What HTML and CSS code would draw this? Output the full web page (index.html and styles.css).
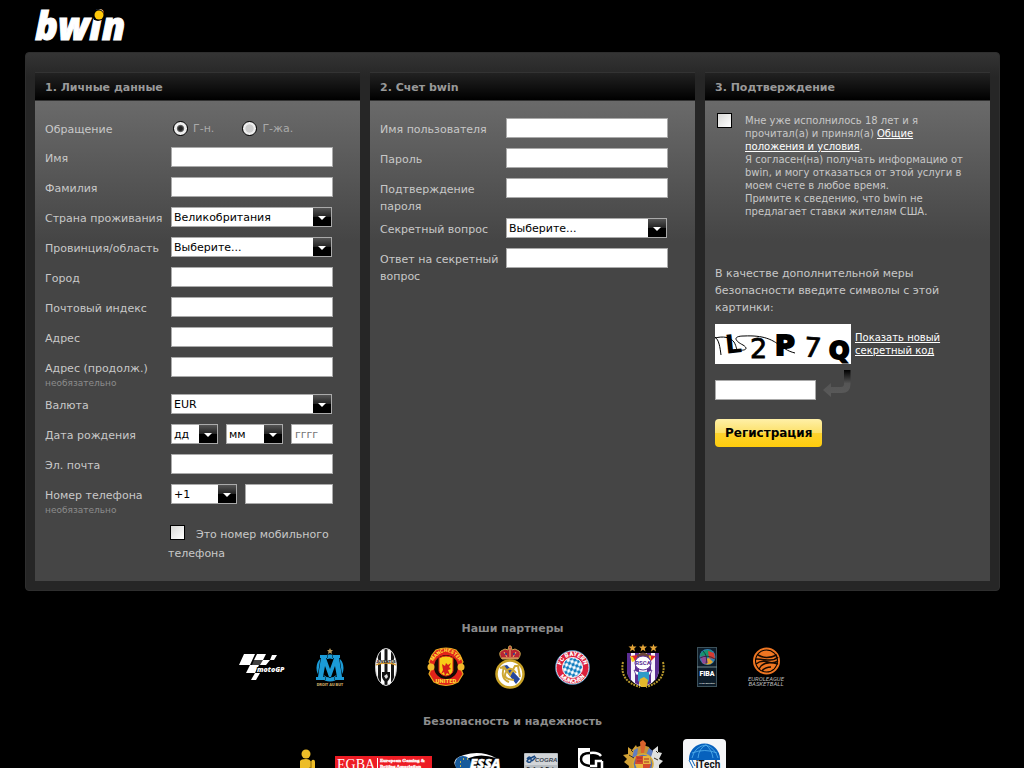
FILE: index.html
```html
<!DOCTYPE html>
<html lang="ru">
<head>
    <meta charset="UTF-8">
    <meta name="viewport" content="width=device-width, initial-scale=1.0">
    <title>bwin - Регистрация</title>
    <link rel="stylesheet" href="styles.css">
</head>
<body>
    <header class="site-header">
        <a href="#" class="logo" aria-label="bwin">
            <svg width="92" height="36" viewBox="0 0 92 36">
                <text x="1" y="31" class="logo-text">bwin</text>
                <circle cx="64" cy="6" r="6" fill="#000"/>
                <circle cx="65" cy="6" r="4.500" fill="#ffc80a"/>
            </svg>
        </a>
    </header>

    <form class="register">
        <section class="panel">
            <h2>1. Личные данные</h2>
            <div class="panel-body">
                <div class="row row-radio">
                    <span class="label">Обращение</span>
                    <div class="radios">
                        <label><input type="radio" name="title" checked>Г-н.</label>
                        <label><input type="radio" name="title">Г-жа.</label>
                    </div>
                </div>
                <div class="row">
                    <label class="label" for="firstName">Имя</label>
                    <input type="text" id="firstName" class="field">
                </div>
                <div class="row">
                    <label class="label" for="lastName">Фамилия</label>
                    <input type="text" id="lastName" class="field">
                </div>
                <div class="row">
                    <label class="label" for="country">Страна проживания</label>
                    <select id="country" class="field"><option>Великобритания</option></select>
                </div>
                <div class="row">
                    <label class="label" for="region">Провинция/область</label>
                    <select id="region" class="field"><option>Выберите...</option></select>
                </div>
                <div class="row">
                    <label class="label" for="city">Город</label>
                    <input type="text" id="city" class="field">
                </div>
                <div class="row">
                    <label class="label" for="zip">Почтовый индекс</label>
                    <input type="text" id="zip" class="field">
                </div>
                <div class="row">
                    <label class="label" for="address">Адрес</label>
                    <input type="text" id="address" class="field">
                </div>
                <div class="row">
                    <label class="label" for="address2">Адрес (продолж.)<small>необязательно</small></label>
                    <input type="text" id="address2" class="field">
                </div>
                <div class="row">
                    <label class="label" for="currency">Валюта</label>
                    <select id="currency" class="field"><option>EUR</option></select>
                </div>
                <div class="row">
                    <label class="label" for="day">Дата рождения</label>
                    <div class="field-group">
                        <select id="day" class="select-day"><option>дд</option></select>
                        <select class="select-month" aria-label="Месяц"><option>мм</option></select>
                        <input type="text" class="grow" placeholder="гггг" aria-label="Год">
                    </div>
                </div>
                <div class="row">
                    <label class="label" for="email">Эл. почта</label>
                    <input type="text" id="email" class="field">
                </div>
                <div class="row">
                    <label class="label" for="phone">Номер телефона<small>необязательно</small></label>
                    <div class="field-group">
                        <select class="select-code" aria-label="Код страны"><option>+1</option></select>
                        <input type="text" id="phone" class="grow">
                    </div>
                </div>
                <label class="mobile"><input type="checkbox">Это номер мобильного телефона</label>
            </div>
        </section>

        <section class="panel">
            <h2>2. Счет bwin</h2>
            <div class="panel-body">
                <div class="row">
                    <label class="label" for="username">Имя пользователя</label>
                    <input type="text" id="username" class="field">
                </div>
                <div class="row">
                    <label class="label" for="password">Пароль</label>
                    <input type="password" id="password" class="field">
                </div>
                <div class="row">
                    <label class="label" for="password2">Подтверждение пароля</label>
                    <input type="password" id="password2" class="field">
                </div>
                <div class="row">
                    <label class="label" for="question">Секретный вопрос</label>
                    <select id="question" class="field"><option>Выберите...</option></select>
                </div>
                <div class="row">
                    <label class="label" for="answer">Ответ на секретный вопрос</label>
                    <input type="text" id="answer" class="field">
                </div>
            </div>
        </section>

        <section class="panel">
            <h2>3. Подтверждение</h2>
            <div class="panel-body confirm">
                <div class="terms">
                    <input type="checkbox" id="terms">
                    <label for="terms">Мне уже исполнилось 18 лет и я прочитал(а) и принял(а) <a href="#">Общие положения и условия</a>.<br>Я согласен(на) получать информацию от bwin, и могу отказаться от этой услуги в моем счете в любое время.<br>Примите к сведению, что bwin не предлагает ставки жителям США.</label>
                </div>
                <label class="captcha-label" for="captcha">В качестве дополнительной меры безопасности введите символы с этой картинки:</label>
                <div class="captcha">
                    <svg width="136" height="40" viewBox="0 0 136 40">
                        <rect width="136" height="40" fill="#fff"/>
                        <g class="captcha-text">
                            <text x="10" y="29" font-size="26" font-weight="bold" transform="rotate(-6 18 20)">L</text>
                            <text x="35" y="34" font-size="27" stroke="#000" stroke-width=".8">2</text>
                            <text x="60" y="31" font-size="27" font-weight="bold" stroke="#000" stroke-width="2">P</text>
                            <text x="89" y="33" font-size="27" stroke="#000" stroke-width=".8" transform="rotate(5 98 24)">7</text>
                            <text x="114" y="35" font-size="24" font-weight="bold" stroke="#000" stroke-width="2">Q</text>
                        </g>
                        <path d="M0 13c4 3 5 10 6 18M0 14c8-2 15-1 19 4 3 5 2 8 4 8 9 1 10-2 5-5-8-4-11-9 1-9 20-1 28 4 34 8 6 4 9 7 17 9" fill="none" stroke="#000" stroke-width="1"/>
                    </svg>
                    <a href="#">Показать новый секретный код</a>
                </div>
                <div class="captcha-entry">
                    <input type="text" id="captcha">
                    <svg width="28" height="27" viewBox="0 0 28 27">
                        <defs>
                            <linearGradient id="arrowFade" x1="0" y1="0" x2="0" y2="1">
                                <stop offset="0" stop-color="#000"/>
                                <stop offset=".5" stop-color="#555"/>
                                <stop offset="1" stop-color="#5a5a5a"/>
                            </linearGradient>
                        </defs>
                        <path d="M21 0h6.500v14q0 9-9 9H8v4L0 20l8-7v4h10q3 0 3-3z" fill="url(#arrowFade)"/>
                    </svg>
                </div>
                <button type="submit" class="register-btn">Регистрация</button>
            </div>
        </section>
    </form>

    <footer>
        <h3>Наши партнеры</h3>
        <div class="logos partners">
            <!-- MotoGP -->
            <svg width="46" height="28" viewBox="0 0 46 28">
                <g fill="#fff">
                    <path d="M5 1h11l-5 11H0zM18 1h9l-3 6h-9zM24 7h7l2-5h5l-3 5h-4l-4 5h-6zM11 12h9l-4 8H7z"/>
                    <path d="M15 7h9l-2 5h-9z" opacity=".25"/>
                    <path d="M16 20h5l-4 7h-5z"/>
                </g>
                <text x="18" y="19" font-family="Open Sans, sans-serif" font-size="7" font-weight="800" font-style="italic" fill="#fff" stroke="#000" stroke-width="2" paint-order="stroke">motoGP</text>
            </svg>
            <!-- Olympique de Marseille -->
            <svg width="30" height="38" viewBox="0 0 30 38">
                <path d="M15 0l1 2h2l-1.500 1.500.5 2.500-2-1.300L13 6l.5-2.500L12 2h2z" fill="#b9985a"/>
                <circle cx="15" cy="20" r="11.500" fill="none" stroke="#1b9bd7" stroke-width="4"/>
                <path d="M5 7h7v3h-1l4 11 4-11h-1V7h7v3h-1l3 19h2v3h-9v-3h2l-2-11-4 11h-2L10 18 8 29h2v3H1v-3h2l3-19H5z" fill="#1b9bd7" stroke="#000" stroke-width="1" paint-order="stroke"/>
                <text x="15" y="38" text-anchor="middle" font-family="Roboto, sans-serif" font-size="4" font-weight="900" fill="#c9a765">DROIT AU BUT</text>
            </svg>
            <!-- Juventus -->
            <svg width="22" height="38" viewBox="0 0 22 38">
                <defs>
                    <clipPath id="juveShape"><ellipse cx="11" cy="19" rx="10.500" ry="18.500"/></clipPath>
                </defs>
                <g clip-path="url(#juveShape)">
                    <path d="M0 0h22v38H0z" fill="#fff"/>
                    <path d="M4.500 0v38M11 0v38M17.500 0v38" stroke="#161616" stroke-width="3"/>
                    <path d="M0 11q11 3 22 0v5q-11-3-22 0z" fill="#fff"/>
                    <path d="M0 17q11-4 22 0" fill="none" stroke="#d99a2e" stroke-width="1.500"/>
                    <path d="M7 24h8v5q-1 4-4 5-3-1-4-5z" fill="#111"/>
                    <path d="M9 28l3-2 1 3-2 2z" fill="#ddd"/>
                </g>
                <text x="11" y="15" text-anchor="middle" font-family="Roboto, sans-serif" font-size="4" font-weight="900" fill="#111">JUVENTUS</text>
                <ellipse cx="11" cy="19" rx="10.500" ry="18.500" fill="none" stroke="#ccc" stroke-width="1"/>
            </svg>
            <!-- Manchester United -->
            <svg width="38" height="38" viewBox="0 0 38 38">
                <path d="M5 7L9 2q10-4 20 0l4 5 3 7-3 5 3 7-5 8q-12 7-24 0L2 26l3-7-3-5z" fill="#e2231a" stroke="#e9a91f" stroke-width="1.200"/>
                <circle cx="19" cy="19" r="12" fill="#140b06"/>
                <circle cx="4" cy="19" r="3.500" fill="#f2b92c"/>
                <circle cx="34" cy="19" r="3.500" fill="#f2b92c"/>
                <path d="M12 10q7-4 14 0v13q-1 4-7 5-6-1-7-5z" fill="#f8cf17" stroke="#e2231a" stroke-width="1"/>
                <path d="M15 16l3 2 1-3 2 2 3-2-2 4 2 2-3 1 2 5-3-2-2 3-1-4-3 2 2-4z" fill="#d51f19"/>
                <path id="mufcTop" d="M4 16Q19-8 34 16" fill="none"/>
                <g font-family="Roboto, sans-serif" font-weight="900" fill="#ffdb35">
                    <text text-anchor="middle" font-size="5"><textPath href="#mufcTop" startOffset="50%">MANCHESTER</textPath></text>
                    <text x="19" y="35" text-anchor="middle" font-size="6">UNITED</text>
                </g>
            </svg>
            <!-- Real Madrid -->
            <svg width="30" height="43" viewBox="0 0 30 43">
                <path d="M7 13Q3 8 6 5l4-2 3 1 1-4h2l1 4 3-1 4 2q3 3-1 8z" fill="#b92332" stroke="#c8a44c" stroke-width="1"/>
                <path d="M7 12h16M15 2v9M9 6l3 5M21 6l-3 5" stroke="#e1c06a" stroke-width="1"/>
                <circle cx="11" cy="8" r="1" fill="#263c9c"/>
                <circle cx="19" cy="8" r="1" fill="#263c9c"/>
                <circle cx="15" cy="28" r="13.500" fill="#fff" stroke="#c9a227" stroke-width="2.500"/>
                <path d="M7 20l5-1 13 14-4 5z" fill="#26479c"/>
                <path d="M5 22l4-1 6 8 5-9h3l2 11M21 27q-6-8-10-1t8 8M9 21q-4 12 5 15" fill="none" stroke="#cfa936" stroke-width="2"/>
            </svg>
            <!-- Bayern -->
            <svg width="35" height="35" viewBox="0 0 35 35">
                <defs>
                    <pattern id="lozenge" width="4" height="5" patternUnits="userSpaceOnUse" patternTransform="rotate(20)">
                        <rect width="4" height="5" fill="#fff"/>
                        <path d="M2 0l2 2.500L2 5 0 2.500z" fill="#0878bd"/>
                    </pattern>
                    <path id="fcbTop" d="M6 17.500a11.500 11.500 0 0 1 23 0"/>
                    <path id="fcbBottom" d="M2 17.500a15.500 15.500 0 0 0 31 0"/>
                </defs>
                <circle cx="17.500" cy="17.500" r="16.500" fill="#dc1f3c" stroke="#fff" stroke-width="1"/>
                <circle cx="17.500" cy="17.500" r="17" fill="none" stroke="#3b83b9" stroke-width=".7"/>
                <circle cx="17.500" cy="17.500" r="10" fill="url(#lozenge)" stroke="#fff" stroke-width="1"/>
                <g font-family="Roboto, sans-serif" font-size="6" font-weight="900" fill="#fff" text-anchor="middle">
                    <text><textPath href="#fcbTop" startOffset="50%">FC BAYERN</textPath></text>
                    <text><textPath href="#fcbBottom" startOffset="50%">MÜNCHEN</textPath></text>
                </g>
            </svg>
            <!-- Anderlecht -->
            <svg width="47" height="46" viewBox="0 0 47 46">
                <path id="rscaStar" d="M12.500 0l1 2.500h3l-2.300 2 .8 3-2.500-1.800L10 7.500l.8-3-2.300-2h3z" fill="#e5a638"/>
                <use href="#rscaStar" x="10.500"/>
                <use href="#rscaStar" x="21"/>
                <path d="M7 9h32v18q-2 12-16 16Q9 39 7 27z" fill="#f6f3fb"/>
                <path d="M7 9h4v28q-4-5-4-10zM15 9h4v32l-4-2zM27 9h4v30l-4 2zM35 9h4v18q-1 6-4 10z" fill="#5b2e93"/>
                <path d="M10 12l8-1-3 6z" fill="#e2252b"/>
                <path d="M10 12l3 1 2 4-3 1z" fill="#f5cf1b"/>
                <path d="M36 12l-8-1 3 6z" fill="#e2252b"/>
                <path d="M31 12l-3-1 3 6z" fill="#f5cf1b"/>
                <path d="M17 11q6-5 12 0l-1 4H18z" fill="#6d4637"/>
                <ellipse cx="23" cy="19" rx="8" ry="7" fill="#fff" stroke="#5b2e93" stroke-width="1"/>
                <text x="23" y="21" text-anchor="middle" font-family="Roboto, sans-serif" font-size="6" font-weight="bold" fill="#5b2e93">RSCA</text>
                <path d="M14 26q9 5 18 0l-2 5H16z" fill="#fff" stroke="#5b2e93" stroke-width=".8"/>
                <path d="M18 28h11v9l-5 4-6-4z" fill="#2f9bc7"/>
                <path d="M20 35l4-2 4 3-1 7h-6l-2-4z" fill="#e4b82b"/>
                <path d="M3 18q-4 19 17 25M43 18q4 19-17 25" fill="none" stroke="#b5962c" stroke-width="2" stroke-dasharray="2 1"/>
            </svg>
            <!-- FIBA -->
            <svg width="20" height="40" viewBox="0 0 20 40">
                <rect x=".5" y=".5" width="19" height="39" fill="#0d1c29" stroke="#3d525b"/>
                <path d="M0 20h20" stroke="#71878d"/>
                <circle cx="10.500" cy="10" r="8" fill="#2f7fb4"/>
                <path d="M3 8q4-7 12-4l-5 7-5 1z" fill="#16956e"/>
                <path d="M11 4l6 2 1 6-6-1z" fill="#d53b32"/>
                <path d="M5 13l7-2 4 4q-5 5-11 0z" fill="#e3a72d"/>
                <path d="M3 10l6-2 2 8-5 1z" fill="#8c4b96"/>
                <path d="M6 4q5 5 3 13M3 11q7-4 15 1" fill="none" stroke="#0d1c29" stroke-width=".7"/>
                <text x="10" y="29" text-anchor="middle" font-family="Roboto, sans-serif" font-size="7" font-weight="900" fill="#fff">FIBA</text>
                <text x="10" y="37" text-anchor="middle" font-family="Roboto, sans-serif" font-size="2" fill="#fff">We Are Basketball</text>
            </svg>
            <!-- Euroleague -->
            <svg width="39" height="40" viewBox="0 0 39 40">
                <circle cx="19.500" cy="14" r="12.500" fill="none" stroke="#ef7622" stroke-width="2"/>
                <circle cx="19.500" cy="14" r="10.500" fill="#ef7622"/>
                <path d="M11 8q8 5 19 0M9 12q12 1 14 1M23 13q5 0 8-3M9 17q5-4 12-2 5 2 10-1M12 22q4-9 19-5M15 24q3-4 9-4" fill="none" stroke="#160900" stroke-width="1.500"/>
                <g font-family="Roboto, sans-serif" font-size="6" font-style="italic" fill="#bbb" text-anchor="middle">
                    <text x="19" y="34">EUROLEAGUE</text>
                    <text x="19" y="39">BASKETBALL</text>
                </g>
            </svg>
        </div>

        <h3>Безопасность и надежность</h3>
        <div class="logos">
            <svg width="16" height="30" viewBox="0 0 16 30">
                <g fill="#edbd28">
                    <circle cx="7" cy="5" r="4.500"/>
                    <path d="M1 12q1-2 6-2 4 0 5 3l1-2q3-1 3 2v7h-3v10H1z"/>
                </g>
                <path d="M12 13v6h-2" fill="none" stroke="#6b4e00" stroke-width=".8"/>
            </svg>
            <svg width="97" height="16" viewBox="0 0 97 16">
                <rect width="97" height="16" fill="#ed1c24"/>
                <text x="2" y="13" font-family="Liberation Serif, serif" font-size="14" fill="#fff">EGBA</text>
                <path d="M42.500 2v13" stroke="#fff"/>
                <g font-family="Liberation Serif, serif" font-size="5" font-weight="bold" fill="#fff" stroke="#fff" stroke-width=".3">
                    <text x="45" y="6">European Gaming &amp;</text>
                    <text x="45" y="12">Betting Association</text>
                </g>
            </svg>
            <svg width="52" height="22" viewBox="0 0 52 22">
                <path d="M8 18Q-5 7 12 2q17-5 32 3Q28 0 17 5T8 18z" fill="#fff"/>
                <ellipse cx="11" cy="11" rx="8" ry="8" fill="#175a9b"/>
                <path d="M11 6h1m3 0h1M8 9h1m-1 4h1m2 3h1" stroke="#f5d13c" stroke-width="1.500"/>
                <text x="18" y="15" font-family="Open Sans, sans-serif" font-size="13" font-weight="800" font-style="italic" fill="#fff" stroke="#fff" stroke-width=".5">ESSA</text>
                <path d="M12 18q18 4 36-2" fill="none" stroke="#fff"/>
            </svg>
            <svg width="34" height="22" viewBox="0 0 34 22">
                <rect width="34" height="22" rx="1" fill="#b7bdc2"/>
                <rect x="1" y="1" width="32" height="11" fill="#d2d5d8"/>
                <path d="M3 6q3-4 4 0T4 9t7-6M8 8l4-4" fill="none" stroke="#174782" stroke-width="1.500"/>
                <text x="11" y="9" font-family="Liberation Sans, sans-serif" font-size="6" font-style="italic" font-weight="bold" fill="#384450">COGRA</text>
                <text x="17" y="18" text-anchor="middle" font-family="Roboto, sans-serif" font-size="6" font-weight="900" fill="#222">Safe &amp; Fair</text>
            </svg>
            <svg width="25" height="32" viewBox="0 0 25 32">
                <path d="M0 0h12v32H0z" fill="#fff"/>
                <path d="M12 5Q3 5 3 11t9 7" fill="none" stroke="#000" stroke-width="2.500"/>
                <path d="M12 5q8-1 11 3M12 18h6v-5h6M24 13v7" fill="none" stroke="#fff" stroke-width="2.500"/>
            </svg>
            <svg width="40" height="48" viewBox="0 0 40 48">
                <path d="M5 7l4 3 4-5 3 7-4 12 2 13H4l2-11-5-4 3-3-4-4 5-1z" fill="#d2a135"/>
                <path d="M35 6l-5 4-3 7 2 20h7V25l4-4-4-2 3-6-4-1z" fill="#dfe0df"/>
                <path d="M14 7l6-2 6 2 2 5-4 4h-8l-4-5z" fill="#c49536"/>
                <path d="M17 2l3-2 3 3-2 10h-3z" fill="#db632c"/>
                <path d="M11 10l4-2-1 8-5 2zM26 8l4 3-2 6-5-2z" fill="#607dc1"/>
                <circle cx="20" cy="24" r="10" fill="#5474b5" stroke="#d9aa36" stroke-width="1.500"/>
                <path d="M13 16h7v8h-8zM20 24h8l-3 8h-5z" fill="#d34a2c"/>
                <path d="M20 16h7l1 8h-8zM12 24h8v8h-5z" fill="#e8b53e"/>
                <path d="M14 18h5m-5 3h5m2-2h5m-5 3h5" stroke="#a92c25"/>
                <path d="M8 10l2 2M6 15l5 3M33 11l2 2M31 18l4 2" stroke="#3c3120"/>
                <path d="M3 39h34l-4 7H7z" fill="#c49536"/>
            </svg>
            <svg width="43" height="50" viewBox="0 0 43 50">
                <rect width="43" height="50" rx="4" fill="#f5f6f8"/>
                <circle cx="21.500" cy="20" r="15.500" fill="#0761bd"/>
                <path d="M9 19Q12 7 23 6q9 3 12 13M15 19q1-10 8-13 6 5 7 13M9 14q13-5 25 0" fill="none" stroke="#55b3ee" stroke-width=".8"/>
                <path d="M5 21h33v14H5z" fill="#f5f6f8"/>
                <path d="M6 21l4 8M9 21l3 6" stroke="#0761bd"/>
                <text x="25" y="29" text-anchor="middle" font-family="Roboto, sans-serif" font-size="10" font-weight="bold" fill="#111">iTech</text>
                <text x="21.500" y="40" text-anchor="middle" font-family="Roboto, sans-serif" font-size="8" fill="#111">Labs</text>
            </svg>
        </div>
    </footer>
</body>
</html>
```
FILE: styles.css
```css
:root {
    --text: #c8c8c8;
    --muted: #999;
    --panel: #454545;
    --border: #aaa;
}

* {
    margin: 0;
    padding: 0;
    box-sizing: border-box;
}

body {
    background-color: #000;
    color: var(--text);
    font-family: Verdana, "DejaVu Sans", sans-serif;
    font-size: 11px;
    line-height: 17px;
}

svg {
    display: block;
    flex: none;
}

.site-header {
    height: 52px;
    padding: 9px 34px;
}

.logo {
    display: inline-block;
}

.logo svg,
.logos svg {
    overflow: visible;
}

.logo-text {
    font-family: "Open Sans", sans-serif;
    font-size: 38px;
    font-weight: 800;
    font-style: italic;
    fill: #fff;
    stroke: #fff;
    stroke-width: 1px;
}

.register {
    display: grid;
    grid-template-columns: 325fr 325fr 285fr;
    gap: 10px;
    margin: 0 24px 0 25px;
    padding: 19px 9px 9px;
    border: 1px solid #2e2e2e;
    border-radius: 4px;
    background: #262626 linear-gradient(#343434, #262626) no-repeat 0 0 / 100% 24px;
}

.panel {
    background: var(--panel) linear-gradient(#6a6a6a, #454545) no-repeat 0 29px / 100% 140px;
}

.panel h2 {
    height: 29px;
    padding: 0 10px;
    border-top: 1px solid #333;
    border-bottom: 1px solid #333;
    background: linear-gradient(#222, #000);
    color: var(--muted);
    font-size: 11px;
    line-height: 29px;
}

.panel-body {
    padding: 17px 10px 18px;
}

.row {
    display: flex;
    align-items: flex-start;
    min-height: 30px;
    padding-bottom: 3px;
}

.row-radio {
    min-height: 29px;
}

.label {
    flex: none;
    width: 126px;
    padding-top: 3px;
}

.label small {
    display: block;
    margin-bottom: 2px;
    color: #8c8c8c;
    font-size: 9px;
    line-height: 12px;
}

input[type="text"],
input[type="password"],
select {
    height: 20px;
    min-width: 0;
    padding: 0 3px;
    border: 1px solid var(--border);
    border-radius: 0;
    background-color: #fff;
    color: #000;
    font: inherit;
}

select {
    appearance: none;
    padding: 0 20px 0 2px;
    background-image: url("data:image/svg+xml,%3Csvg xmlns='http://www.w3.org/2000/svg' width='18' height='18'%3E%3ClinearGradient id='g' x2='0' y2='1'%3E%3Cstop stop-color='%23555'/%3E%3Cstop offset='.5' stop-color='%23222'/%3E%3Cstop offset='.5'/%3E%3C/linearGradient%3E%3Cpath fill='url(%23g)' d='M0 0h18v18H0z'/%3E%3Cpath fill='%23fff' d='M5 8h8l-4 4z'/%3E%3C/svg%3E");
    background-repeat: no-repeat;
    background-position: right center;
}

.field,
.field-group {
    width: 162px;
}

select.field {
    width: 161px;
}

.field-group {
    display: flex;
    gap: 8px;
}

.select-day {
    width: 47px;
}

.select-month {
    width: 57px;
}

.select-code {
    width: 66px;
}

.grow {
    flex: 1;
}

.grow::placeholder {
    color: #757575;
}

.radios {
    display: flex;
    gap: 28px;
    padding: 2px 0 0 2px;
}

.radios label {
    display: flex;
    align-items: center;
    gap: 5px;
    color: #aaa;
}

input[type="radio"] {
    appearance: none;
    width: 15px;
    height: 15px;
    border: 1px solid #000;
    border-radius: 50%;
    background: radial-gradient(#ccc 40%, #eee 50%);
}

input[type="radio"]:checked {
    background: radial-gradient(#222 20%, #666 35%, #eee 45%);
}

input[type="checkbox"] {
    appearance: none;
    width: 15px;
    height: 15px;
    border: 1px solid #000;
    background: linear-gradient(135deg, #d8d8d6, #fff);
}

.mobile {
    display: block;
    width: 180px;
    margin: 4px 0 0 123px;
    line-height: 19px;
}

.mobile input {
    margin: 0 11px 0 2px;
    vertical-align: -2px;
}

.confirm {
    padding-top: 12px;
}

.terms {
    display: flex;
    align-items: flex-start;
    gap: 13px;
    padding: 0 10px 0 2px;
    font-size: 10px;
    line-height: 13px;
}

.terms input {
    flex: none;
}

.terms label {
    flex: 1;
    padding-top: 1px;
}

.confirm a {
    color: #fff;
}

.captcha-label {
    display: block;
    max-width: 240px;
    margin-top: 47px;
}

.captcha {
    display: flex;
    align-items: center;
    gap: 4px;
    margin-top: 8px;
}

.captcha a {
    max-width: 100px;
    font-size: 10px;
    line-height: 13px;
}

.captcha-text {
    font-family: "DejaVu Sans", sans-serif;
}

.captcha-entry {
    display: flex;
    align-items: flex-end;
    gap: 7px;
    margin-top: 6px;
}

.captcha-entry input {
    width: 101px;
}

.captcha-entry svg {
    margin-bottom: 3px;
}

.register-btn {
    height: 28px;
    margin-top: 19px;
    padding: 0 10px;
    border: 0;
    border-radius: 4px;
    background: linear-gradient(#fff0a8, #fce067 50%, #fdd22f 50%, #ffcd0c);
    color: #000;
    font-family: inherit;
    font-size: 12px;
    font-weight: bold;
    cursor: pointer;
}

footer {
    margin: 0 24px 0 25px;
    padding-top: 29px;
    text-align: center;
}

footer h3 {
    color: #8c8c8c;
    font-size: 11px;
    line-height: 17px;
}

.logos {
    display: flex;
    justify-content: center;
    align-items: center;
    gap: 20px;
    height: 50px;
    margin-top: 9px;
}

.partners {
    gap: 30px;
    height: 60px;
    margin: 0 0 16px;
}
```
